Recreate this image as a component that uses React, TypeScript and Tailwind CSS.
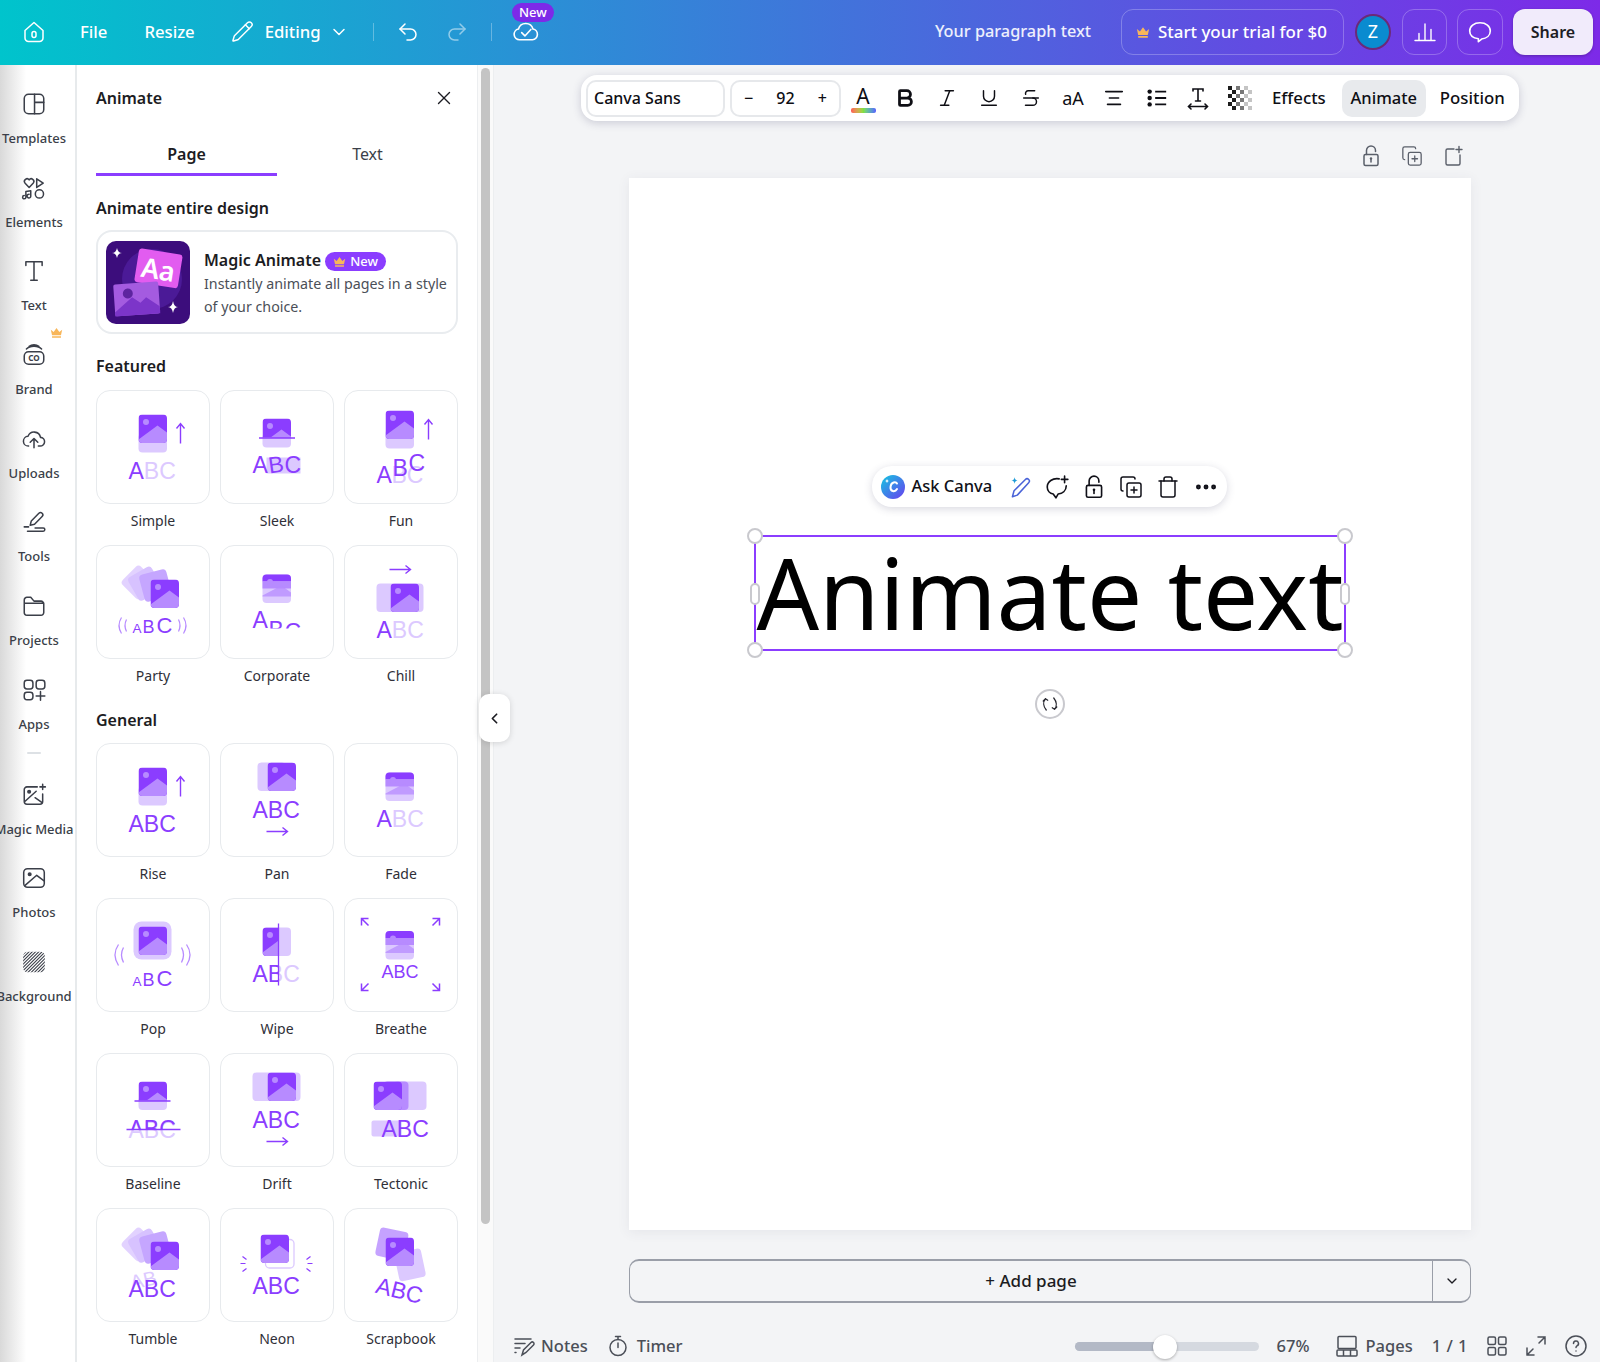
import { type ReactNode } from "react";
import {
  AlignCenter,
  Bold,
  ChevronDown,
  ChevronLeft,
  CopyPlus,
  Ellipsis,
  Italic,
  Pencil,
  Redo2,
  Strikethrough,
  Trash,
  Underline,
  Undo2,
  X,
} from "lucide-react";

const P = "#8b3dff";
const M = "#b78bff";
const F = "#dcc9ff";
const ABC_FONT = "Liberation Sans, sans-serif";

function Pic({ x, y, h = 28.5 }: { x: number; y: number; h?: number }) {
  const id = `c${x}-${y}-${h}`.replace(/\./g, "_");
  return (
    <g transform={`translate(${x} ${y})`}>
      <clipPath id={id}>
        <rect width="28.5" height={h} />
      </clipPath>
      <g clipPath={`url(#${id})`}>
        <rect width="28.5" height="28.5" rx="4" fill={P} />
        <circle cx="7.5" cy="7.5" r="3" fill={M} />
        <path d="M0 25 19 11l9.5 7v6.5a4 4 0 0 1-4 4H4a4 4 0 0 1-4-3.500z" fill={M} />
      </g>
    </g>
  );
}

function Bands({ x, y }: { x: number; y: number }) {
  return (
    <g transform={`translate(${x} ${y})`}>
      <rect width="28.5" height="28.5" rx="4" fill={F} />
      <path d="M0 7V4a4 4 0 0 1 4-4h20.500a4 4 0 0 1 4 4v3z" fill={P} />
      <rect y="7" width="28.5" height="7" fill={M} />
      <path d="M0 21 19 11l9.500 7v4H0z" fill={M} opacity="0.75" />
      <circle cx="7.5" cy="7.5" r="3" fill={M} />
    </g>
  );
}

function Abc({
  x = 33,
  y,
  size = 23,
  a = P,
  b = P,
}: {
  x?: number;
  y: number;
  size?: number;
  a?: string;
  b?: string;
}) {
  return (
    <text x={x} y={y} fontSize={size} fontFamily={ABC_FONT} fill={a}>
      A<tspan fill={b}>BC</tspan>
    </text>
  );
}

function Letter({ ch, x, y, size = 23, fill = P, rotate }: { ch: string; x: number; y: number; size?: number; fill?: string; rotate?: string }) {
  return (
    <text x={x} y={y} fontSize={size} fontFamily={ABC_FONT} fill={fill} transform={rotate}>
      {ch}
    </text>
  );
}

function GrowAbc() {
  return (
    <>
      <Letter ch="A" x={37} y={88} size={13.5} />
      <Letter ch="B" x={47} y={88} size={18} />
      <Letter ch="C" x={61} y={88} size={22} />
    </>
  );
}

function UpArrow({ x, y }: { x: number; y: number }) {
  return <path d={`M${x} ${y + 20}V${y}m-4 5 4-5 4 5`} fill="none" stroke={P} strokeWidth="1.4" />;
}

function RightArrow({ x, y }: { x: number; y: number }) {
  return <path d={`M${x} ${y}h21m-5-4 5 4-5 4`} fill="none" stroke={P} strokeWidth="1.4" />;
}

function Stack({ y }: { y: number }) {
  return (
    <g>
      <rect x="30" y={y - 3} width="26" height="26" rx="4" fill="#e2d2ff" transform={`rotate(-45 43 ${y + 10})`} />
      <rect x="36" y={y - 2} width="27" height="27" rx="4" fill="#d7c2ff" transform={`rotate(-30 49 ${y + 11})`} />
      <rect x="46" y={y - 1} width="28" height="28" rx="4" fill="#c5a6ff" transform={`rotate(-15 60 ${y + 13})`} />
    </g>
  );
}

const tiles: Record<string, ReactNode> = {
  Simple: (
    <>
      <rect x="43" y="44" width="28.5" height="19" rx="4" fill={F} />
      <Pic x={43} y={25} />
      <UpArrow x={85} y={34} />
      <Abc y={89} b={F} />
    </>
  ),
  Sleek: (
    <>
      <rect x="47" y="68" width="34" height="16" fill={F} />
      <rect x="43" y="44" width="28.5" height="14" rx="4" fill={F} />
      <Pic x={43} y={29} h={19} />
      <path d="M39.500 48.500h36" stroke={P} strokeWidth="1.300" />
      <Letter ch="A" x={33} y={83} />
      <Letter ch="B" x={49} y={83} rotate="rotate(-8 56 76)" />
      <Letter ch="C" x={65} y={83} />
    </>
  ),
  Fun: (
    <>
      <rect x="42" y="40" width="28.500" height="19" rx="4" fill={F} />
      <Pic x={42} y={21} />
      <UpArrow x={85} y={30} />
      <Letter ch="BC" x={48} y={93} fill={F} />
      <Letter ch="A" x={33} y={93} />
      <Letter ch="B" x={49} y={86} />
      <Letter ch="C" x={65} y={81} />
    </>
  ),
  Party: (
    <>
      <Stack y={28} />
      <Pic x={55} y={35} />
      <path d="M26 73q-5 8 0 16M31 75q-3 6 0 12M88 73q5 8 0 16M83 75q3 6 0 12" fill="none" stroke={M} strokeWidth="1.200" />
      <GrowAbc />
    </>
  ),
  Corporate: (
    <>
      <Bands x={43} y={30} />
      <clipPath id="corp">
        <rect x="20" y="60" width="80" height="24" />
      </clipPath>
      <g clipPath="url(#corp)">
        <Letter ch="A" x={33} y={83} />
        <Letter ch="B" x={49} y={93} />
        <Letter ch="C" x={65} y={95} />
      </g>
    </>
  ),
  Chill: (
    <>
      <RightArrow x={46} y={25} />
      <rect x="33" y="39" width="47" height="28.5" rx="4" fill={F} />
      <Pic x={47} y={39} />
      <Abc y={93} b={F} />
    </>
  ),
  Rise: (
    <>
      <rect x="43" y="44" width="28.5" height="19" rx="4" fill={F} />
      <Pic x={43} y={25} />
      <UpArrow x={85} y={34} />
      <Abc y={89} />
    </>
  ),
  Pan: (
    <>
      <rect x="38" y="20" width="28.5" height="28.5" rx="4" fill={F} />
      <Pic x={48} y={20} />
      <Abc y={75} />
      <RightArrow x={47} y={89} />
    </>
  ),
  Fade: (
    <>
      <Bands x={42} y={30} />
      <Abc y={84} b={F} />
    </>
  ),
  Pop: (
    <>
      <rect x="38" y="24" width="38" height="38" rx="8" fill={F} />
      <Pic x={43} y={29} />
      <path d="M23 47q-7 10 0 21M28 50q-4 7 0 15M91 47q7 10 0 21M86 50q4 7 0 15" fill="none" stroke={M} strokeWidth="1.300" />
      <GrowAbc />
    </>
  ),
  Wipe: (
    <>
      <rect x="43" y="30" width="28.5" height="28.5" rx="4" fill={F} />
      <clipPath id="wipeL">
        <rect x="20" y="0" width="39" height="114" />
      </clipPath>
      <clipPath id="wipeR">
        <rect x="59" y="0" width="40" height="114" />
      </clipPath>
      <g clipPath="url(#wipeL)">
        <Pic x={43} y={30} />
        <Abc y={84} />
      </g>
      <g clipPath="url(#wipeR)">
        <Abc y={84} a={F} b={F} />
      </g>
      <path d="M59 26v62" stroke={P} strokeWidth="1.300" />
    </>
  ),
  Breathe: (
    <>
      <Bands x={42} y={33.5} />
      <Abc x={38} y={80} size={18} />
      <path
        d="M18 28v-7h7M18 21l7 7M96 28v-7h-7M96 21l-7 7M18 86v7h7M18 93l7-7M96 86v7h-7M96 93l-7-7"
        fill="none"
        stroke={P}
        strokeWidth="1.500"
      />
    </>
  ),
  Baseline: (
    <>
      <rect x="43" y="44" width="28.500" height="13.500" rx="4" fill={F} />
      <Pic x={43} y={29} h={19} />
      <path d="M39 48.500h36" stroke={P} strokeWidth="1.300" />
      <Letter ch="ABC" x={33} y={85} fill={F} />
      <clipPath id="base">
        <rect x="20" y="60" width="80" height="17" />
      </clipPath>
      <g clipPath="url(#base)">
        <Abc y={84} />
      </g>
      <path d="M31 77h54" stroke={P} strokeWidth="1.300" />
    </>
  ),
  Drift: (
    <>
      <rect x="33" y="20" width="48" height="28.5" rx="4" fill={F} />
      <Pic x={48} y={20} />
      <Abc y={75} />
      <RightArrow x={47} y={89} />
    </>
  ),
  Tectonic: (
    <>
      <rect x="50" y="29" width="33" height="28.500" rx="4" fill={F} />
      <rect x="40" y="29" width="25" height="28.500" rx="4" fill={M} />
      <Pic x={30} y={29} />
      <rect x="28" y="68" width="30" height="16" rx="2" fill={F} />
      <Abc x={38} y={84} />
    </>
  ),
  Tumble: (
    <>
      <Stack y={27} />
      <Pic x={55} y={34} />
      <Letter ch="AB" x={35} y={80} size={20} fill={F} rotate="rotate(-12 45 75)" />
      <Abc y={89} />
    </>
  ),
  Neon: (
    <>
      <rect x="46" y="32" width="28.500" height="28.500" rx="4" fill="none" stroke={F} strokeWidth="1.300" />
      <Pic x={41} y={27} />
      <path d="M23 49l4 3M21 56h5M23 64l4-3M91 49l-4 3M93 56h-5M91 64l-4-3" stroke={P} strokeWidth="1.200" />
      <Abc y={86} />
    </>
  ),
  Scrapbook: (
    <>
      <rect x="34" y="22" width="29" height="29" rx="4" fill={M} opacity="0.8" transform="rotate(12 48 36)" />
      <rect x="53" y="43" width="27" height="29" rx="4" fill={F} transform="rotate(-12 66 57)" />
      <Pic x={42} y={30} />
      <g transform="rotate(14 56 84)">
        <Abc x={32} y={91} />
      </g>
    </>
  ),
};

function Tile({ name }: { name: string }) {
  return (
    <div className="flex flex-col items-center">
      <div className="h-[114px] w-[114px] rounded-[14px] border-[1.5px] border-[#e7eaed] bg-white">
        <svg viewBox="1.5 1.5 111 111" className="h-[111px] w-[111px]">
          {tiles[name]}
        </svg>
      </div>
      <div className="mt-[8px] h-[33px] text-[14px] leading-[18px] text-[#2f2f38]">{name}</div>
    </div>
  );
}

function TileGrid({ names }: { names: string[] }) {
  return (
    <div className="grid grid-cols-[114px_114px_114px] gap-x-[10px] gap-y-0">
      {names.map((n) => (
        <Tile key={n} name={n} />
      ))}
    </div>
  );
}

function RailIcon({ children }: { children: ReactNode }) {
  return (
    <svg viewBox="0 0 24 24" className="h-[26px] w-[26px]" fill="none" stroke="currentColor" strokeWidth="1.400" strokeLinecap="round" strokeLinejoin="round">
      {children}
    </svg>
  );
}

function LockIcon({ className }: { className: string }) {
  return (
    <svg viewBox="0 0 24 24" className={className} fill="none" stroke="currentColor" strokeWidth="1.500" strokeLinecap="round">
      <rect x="5" y="10.500" width="14" height="11" rx="1.500" />
      <path d="M7.500 10.500V6.500a4.500 4.500 0 0 1 9 0v1" />
      <path d="M12 15v3" strokeWidth="1.500" />
      <circle cx="12" cy="14.500" r="1.200" fill="currentColor" stroke="none" />
    </svg>
  );
}

const railItems: { label: string; icon: ReactNode }[] = [
  {
    label: "Templates",
    icon: (
      <RailIcon>
        <rect x="3" y="3" width="18" height="18" rx="4" />
        <path d="M12.500 3v18M12.500 10.500H21" />
      </RailIcon>
    ),
  },
  {
    label: "Elements",
    icon: (
      <RailIcon>
        <path d="M7.500 11.500 3.600 7.300a2.400 2.400 0 0 1 3.900-2.800 2.400 2.400 0 0 1 3.900 2.800zM14.500 3.500l6 4-6 4zM9 14.500v5a1.700 1.700 0 1 1-1.500-1.700M9 14.500l-4.500.7v5.300a1.500 1.500 0 1 1-1.500-1.500" />
        <circle cx="17" cy="17.500" r="3.800" />
      </RailIcon>
    ),
  },
  {
    label: "Text",
    icon: (
      <RailIcon>
        <path d="M4.500 7V3.500h15V7M12 3.500v17M9 20.500h6" />
      </RailIcon>
    ),
  },
  {
    label: "Brand",
    icon: (
      <RailIcon>
        <rect x="3" y="9" width="18" height="11.500" rx="4" />
        <path d="M5 6.500c3-3.500 11-3.500 14 0M7.500 4c2.500-2 6.500-2 9 0" />
        <text x="12" y="17.500" textAnchor="middle" fontSize="7.500" fontWeight="700" stroke="none" fill="currentColor" fontFamily="Noto Sans, sans-serif">
          CO
        </text>
      </RailIcon>
    ),
  },
  {
    label: "Uploads",
    icon: (
      <RailIcon>
        <path d="M7 18.500a4.500 4.500 0 0 1-.500-9 6 6 0 0 1 11.500 1 4 4 0 0 1-.500 8H16M12 20v-8.500m-3.500 3.500 3.500-3.500 3.500 3.500" />
      </RailIcon>
    ),
  },
  {
    label: "Tools",
    icon: (
      <RailIcon>
        <path d="m8.500 15 1-4 7-7a2 2 0 0 1 3 3l-7 7zM3 16.500h4M6 20.500h14.500a1.500 1.500 0 0 0 0-3H13" />
      </RailIcon>
    ),
  },
  {
    label: "Projects",
    icon: (
      <RailIcon>
        <path d="M3 8V6.500A2.500 2.500 0 0 1 5.500 4H9l3 3.500h6.500A2.500 2.500 0 0 1 21 10v8a2.500 2.500 0 0 1-2.500 2.500h-13A2.500 2.500 0 0 1 3 18zM3 9.500h18" />
      </RailIcon>
    ),
  },
  {
    label: "Apps",
    icon: (
      <RailIcon>
        <rect x="3" y="3" width="8" height="8" rx="2.500" />
        <rect x="14" y="3" width="8" height="8" rx="2.500" />
        <rect x="3" y="14" width="8" height="7" rx="2.500" />
        <path d="M18 13.500v8M14 17.500h8" />
      </RailIcon>
    ),
  },
];

const railItems2: { label: string; icon: ReactNode }[] = [
  {
    label: "Magic Media",
    icon: (
      <RailIcon>
        <path d="M15 4.500H5.500A2.500 2.500 0 0 0 3 7v11a2.500 2.500 0 0 0 2.500 2.500h12A2.500 2.500 0 0 0 20 18v-7M3.500 18 14 8.500" />
        <circle cx="7.500" cy="9" r="1.200" fill="currentColor" />
        <path d="M13 14.500l6.500 4.500M20 2v5M17.500 4.500h5" />
      </RailIcon>
    ),
  },
  {
    label: "Photos",
    icon: (
      <RailIcon>
        <rect x="2.500" y="3.500" width="19" height="17" rx="3.500" />
        <circle cx="8" cy="8.500" r="1.200" fill="currentColor" />
        <path d="m3.500 19 11-9.500 6.500 5" />
      </RailIcon>
    ),
  },
  {
    label: "Background",
    icon: (
      <RailIcon>
        <clipPath id="bgclip">
          <rect x="2" y="2.500" width="20" height="19" rx="4" />
        </clipPath>
        <g clipPath="url(#bgclip)" strokeWidth="1">
          <path d="M-2 6 6-2M-2 9 9-2M-2 12 12-2M-2 15 15-2M-2 18 18-2M-2 21 21-2M-2 24 24-2M1 24 26-1M4 24 26 2M7 24 26 5M10 24 26 8M13 24 26 11M16 24 26 14M19 24 26 17" />
        </g>
      </RailIcon>
    ),
  },
];

function Crown({ className }: { className: string }) {
  return (
    <svg viewBox="0 0 16 13" className={className} fill="#f8b65a">
      <path d="M1 3l3.500 3L8 1l3.500 5L15 3l-1.500 7h-11zM2.500 11h11v2h-11z" />
    </svg>
  );
}

function RailItem({ label, icon, crown }: { label: string; icon: ReactNode; crown?: boolean }) {
  return (
    <div className="relative flex h-[83.700px] w-full flex-col items-center pt-[15px] text-[#3b3f49]">
      {crown && <Crown className="absolute left-[50px] top-[0px] h-[11px] w-[13px]" />}
      {icon}
      <div className="mt-[12px] whitespace-nowrap text-[13px] font-medium leading-[18px]">{label}</div>
    </div>
  );
}

function HeaderDivider() {
  return <div className="h-[18px] w-px bg-white/30" />;
}

function Header() {
  return (
    <header className="relative flex h-[65px] shrink-0 items-center bg-[linear-gradient(90deg,#00c4cc,#7d2ae8)] pb-[2px] pl-[22px] pr-[7px] text-white">
      <svg viewBox="0 0 24 24" className="h-[24px] w-[24px]" fill="none" stroke="currentColor" strokeWidth="1.500" strokeLinejoin="round">
        <path d="M3 10.500 12 2.500l9 8v7.500a3.500 3.500 0 0 1-3.500 3.500h-11A3.500 3.500 0 0 1 3 18z" />
        <rect x="10" y="11.500" width="4" height="6" rx="2" />
      </svg>
      <span className="ml-[34px] text-[16.700px] font-medium">File</span>
      <span className="ml-[37px] text-[16.700px] font-medium">Resize</span>
      <Pencil className="ml-[36px] h-[23px] w-[23px]" strokeWidth={1.500} />
      <span className="ml-[11px] text-[16.700px] font-medium">Editing</span>
      <ChevronDown className="ml-[8px] h-[20px] w-[20px]" strokeWidth={1.800} />
      <div className="ml-[24px]">
        <HeaderDivider />
      </div>
      <Undo2 className="ml-[22px] h-[24px] w-[24px]" strokeWidth={1.500} />
      <Redo2 className="ml-[25px] h-[24px] w-[24px] opacity-50" strokeWidth={1.500} />
      <div className="ml-[22px]">
        <HeaderDivider />
      </div>
      <svg viewBox="0 0 26 24" className="ml-[20px] mt-[-3px] h-[26px] w-[28px]" fill="none" stroke="currentColor" strokeWidth="1.500" strokeLinecap="round" strokeLinejoin="round">
        <path d="M7 21a5 5 0 0 1-1-9.900 7 7 0 0 1 13.500 0A5 5 0 0 1 19 21zM9 14.500l3 3 5.500-6" />
      </svg>
      <div className="absolute left-[512px] top-[3px] rounded-full bg-[#7d2ae8] px-[7px] text-[13px] font-medium leading-[19px]">New</div>
      <div className="ml-auto text-[16.300px] font-medium text-white/90">Your paragraph text</div>
      <div className="ml-[30px] flex h-[46px] w-[223px] items-center rounded-[12px] border border-white/25 pl-[14px] text-[16.900px] font-medium">
        <Crown className="h-[12px] w-[14px]" />
        <span className="ml-[8px] whitespace-nowrap">Start your trial for $0</span>
      </div>
      <div className="ml-[11px] flex h-[36px] w-[36px] items-center justify-center rounded-full border-2 border-[#6b2a78] bg-[#0a8bd0] text-[18px]">Z</div>
      <div className="ml-[11px] flex h-[46px] w-[45px] items-center justify-center rounded-[12px] border border-white/25">
        <svg viewBox="0 0 24 24" className="h-[24px] w-[24px]" fill="none" stroke="currentColor" strokeWidth="1.400" strokeLinecap="round">
          <path d="M2 20.500h20M6 20.500v-7M12 20.500V4M18 20.500v-11" />
        </svg>
      </div>
      <div className="ml-[10px] flex h-[46px] w-[46px] items-center justify-center rounded-[12px] border border-white/25">
        <svg viewBox="0 0 24 24" className="h-[26px] w-[26px]" fill="none" stroke="currentColor" strokeWidth="1.500" strokeLinejoin="round">
          <path d="M12 3.500c5.500 0 9.500 3 9.500 7.500 0 4.200-3.500 7-8 7.500l-3 2.500v-2.700C6 17.500 2.500 15 2.500 11c0-4.500 4-7.500 9.500-7.500z" />
        </svg>
      </div>
      <div className="ml-[10px] flex h-[46px] w-[80px] items-center justify-center rounded-[12px] bg-[#f1ebfb] text-[16px] font-semibold text-[#1d1d24] shadow-[0_1px_3px_rgba(0,0,0,0.25)]">Share</div>
    </header>
  );
}

function Rail() {
  return (
    <aside className="flex h-full w-[77px] shrink-0 flex-col overflow-hidden border-r-2 border-[#e7eaec] bg-gradient-to-r from-[#d9d9d9] via-white via-[35%] to-white pr-[7px] pt-[11px]">
      {railItems.map((item) => (
        <RailItem key={item.label} {...item} crown={item.label === "Brand"} />
      ))}
      <div className="h-[21px] shrink-0 pt-[6px]">
        <div className="mx-auto h-[2px] w-[14px] rounded bg-[#dde1e5]" />
      </div>
      {railItems2.map((item) => (
        <RailItem key={item.label} {...item} />
      ))}
    </aside>
  );
}

function MagicThumb() {
  return (
    <svg viewBox="0 0 84 83" className="h-[83px] w-[84px] shrink-0 rounded-[10px]">
      <rect width="84" height="83" fill="#3c0d7c" />
      <circle cx="46" cy="38" r="30" fill="#4b1a97" />
      <g transform="rotate(9 50 30)">
        <rect x="30" y="10" width="44" height="34" rx="3" fill="#e25cf0" />
        <text x="35" y="38" fontSize="27" fontWeight="600" fill="#fff" fontFamily="Noto Sans, sans-serif">
          Aa
        </text>
      </g>
      <g transform="rotate(-4 30 55)">
        <rect x="8" y="42" width="45" height="32" rx="2" fill="#a45be0" />
        <circle cx="22" cy="52" r="5" fill="#5d259f" />
        <path d="M8 70 26 56l8 6 6-5 13 10v7H8z" fill="#7c35c9" />
      </g>
      <path d="M11 7q1 5 5 5-4 0-5 5-1-5-5-5 4 0 5-5zM67 60q1 6 5 6-4 0-5 6-1-6-5-6 4 0 5-6z" fill="#fff" />
    </svg>
  );
}

function AnimatePanel() {
  return (
    <div className="h-full w-[400px] shrink-0 overflow-hidden bg-white pl-[19px]">
      <div className="flex h-[66px] items-center justify-between pr-[22px]">
        <h1 className="text-[16px] font-semibold text-[#1c1c22]">Animate</h1>
        <X className="h-[22px] w-[22px] text-[#1c1c22]" strokeWidth={1.500} />
      </div>
      <div className="flex w-[362px] text-[16px]">
        <div className="h-[45px] w-[181px] border-b-[3px] border-[#8b3dff] pt-[11px] text-center font-semibold text-[#1c1c22]">Page</div>
        <div className="h-[45px] w-[181px] pt-[11px] text-center text-[#3b3f49]">Text</div>
      </div>
      <h2 className="mt-[21px] text-[16px] font-semibold leading-[22px] text-[#1c1c22]">Animate entire design</h2>
      <div className="mt-[11px] flex h-[104px] w-[362px] items-center rounded-[16px] border-2 border-[#e9ecef] pl-[8px]">
        <MagicThumb />
        <div className="ml-[14px] pt-[3px]">
          <div className="flex items-center">
            <span className="text-[16px] font-semibold leading-[22px] text-[#1c1c22]">Magic Animate</span>
            <span className="ml-[4px] mt-[3px] flex h-[19px] w-[61px] items-center justify-center gap-[4px] rounded-full bg-[#8b3dff] text-[13px] font-medium text-white">
              <Crown className="h-[11px] w-[13px]" />
              New
            </span>
          </div>
          <p className="mt-[1px] w-[250px] text-[14.250px] leading-[23px] text-[#4b4f58]">Instantly animate all pages in a style of your choice.</p>
        </div>
      </div>
      <h2 className="mt-[21px] text-[16px] font-semibold leading-[22px] text-[#1c1c22]">Featured</h2>
      <div className="mt-[13px]">
        <TileGrid names={["Simple", "Sleek", "Fun", "Party", "Corporate", "Chill"]} />
      </div>
      <h2 className="mt-[9px] text-[16px] font-semibold leading-[22px] text-[#1c1c22]">General</h2>
      <div className="mt-[12px]">
        <TileGrid names={["Rise", "Pan", "Fade", "Pop", "Wipe", "Breathe", "Baseline", "Drift", "Tectonic", "Tumble", "Neon", "Scrapbook"]} />
      </div>
    </div>
  );
}

function Toolbar() {
  const icon = "h-[22px] w-[22px]";
  return (
    <div className="flex h-[46px] w-[938px] shrink-0 items-center rounded-[16px] bg-white pl-[5px] text-[#0e0e14] shadow-[0_2px_8px_rgba(60,60,100,0.22)]">
      <div className="flex h-[37px] w-[139px] items-center rounded-[10px] border-2 border-[#e6e8eb] pl-[6px] text-[16px] font-medium">Canva Sans</div>
      <div className="ml-[5px] flex h-[37px] w-[111px] items-center justify-between rounded-[10px] border-2 border-[#e6e8eb] px-[12px] text-[16px] font-medium">
        <span>−</span>
        <span>92</span>
        <span>+</span>
      </div>
      <div className="ml-[9px] flex w-[26px] flex-col items-center">
        <span className="text-[21px] leading-[24px]">A</span>
        <div className="h-[5px] w-[25px] rounded-[2px] bg-gradient-to-r from-[#ff5757] via-[#7fe041] to-[#5b5bff]" />
      </div>
      <div className="ml-[17px] flex w-[24px] justify-center">
        <Bold className={icon} strokeWidth={3} />
      </div>
      <div className="ml-[18px] flex w-[24px] justify-center">
        <Italic className={icon} strokeWidth={1.600} />
      </div>
      <div className="ml-[18px] flex w-[24px] justify-center">
        <Underline className={icon} strokeWidth={1.600} />
      </div>
      <div className="ml-[18px] flex w-[24px] justify-center">
        <Strikethrough className={icon} strokeWidth={1.600} />
      </div>
      <div className="ml-[18px] flex w-[24px] justify-center text-[18px]">aA</div>
      <div className="ml-[17px] flex w-[24px] justify-center">
        <AlignCenter className={icon} strokeWidth={1.800} />
      </div>
      <div className="ml-[19px] flex w-[24px] justify-center">
        <svg viewBox="0 0 24 24" className={icon} fill="currentColor">
          <circle cx="4" cy="5" r="2.400" />
          <circle cx="4" cy="12" r="2.400" />
          <circle cx="4" cy="19" r="2.400" />
          <path d="M10 4h12v2H10zM10 11h12v2H10zM10 18h12v2H10z" />
        </svg>
      </div>
      <div className="ml-[17px] flex w-[24px] justify-center">
        <svg viewBox="0 0 24 24" className="h-[26px] w-[26px]" fill="none" stroke="currentColor" strokeWidth="1.600" strokeLinecap="round">
          <path d="M7 5V3h10v2M12 3v12M9.500 15h5M2.500 20.500h19M5 18l-2.500 2.500L5 23M19 18l2.500 2.500L19 23" />
        </svg>
      </div>
      <div className="ml-[18px] grid w-[24px] grid-cols-6">
        {Array.from({ length: 36 }).map((_, i) => {
          const row = Math.floor(i / 6);
          const col = i % 6;
          const on = (row + col) % 2 === 0;
          return (
            <div
              key={i}
              className={`h-[4px] w-[4px] ${!on ? "bg-white" : col < 2 ? "bg-[#1d1d1d]" : col < 4 ? "bg-[#777]" : "bg-[#c4c4c4]"}`}
            />
          );
        })}
      </div>
      <span className="ml-[20px] text-[16.800px] font-medium">Effects</span>
      <div className="ml-[16px] flex h-[37px] w-[84px] items-center justify-center rounded-[10px] bg-[#e8eaed] text-[16.500px] font-medium">Animate</div>
      <span className="ml-[14px] text-[16.800px] font-medium">Position</span>
    </div>
  );
}

function Handle({ className }: { className: string }) {
  return <div className={`absolute rounded-full border-2 border-[#c9c9ce] bg-white ${className}`} />;
}

function SelectedText() {
  return (
    <div className="relative flex h-[116px] w-[592px] items-center justify-center border-2 border-[#8b3dff]">
      <span className="mt-[-2px] whitespace-nowrap text-[98px] leading-[112px] text-black">Animate text</span>
      <Handle className="-left-[9px] -top-[9px] h-[16px] w-[16px]" />
      <Handle className="-right-[9px] -top-[9px] h-[16px] w-[16px]" />
      <Handle className="-left-[9px] -bottom-[9px] h-[16px] w-[16px]" />
      <Handle className="-right-[9px] -bottom-[9px] h-[16px] w-[16px]" />
      <Handle className="-left-[6px] top-[46px] h-[22px] w-[10px]" />
      <Handle className="-right-[6px] top-[46px] h-[22px] w-[10px]" />
    </div>
  );
}

function AskPill() {
  return (
    <div className="ml-[-2px] flex h-[41px] w-[355px] items-center rounded-[20px] bg-white pl-[9px] text-[#101018] shadow-[0_2px_8px_rgba(60,60,100,0.2)]">
      <svg viewBox="0 0 24 24" className="h-[24px] w-[24px]">
        <defs>
          <linearGradient id="askg" x1="0" y1="0" x2="1" y2="1">
            <stop offset="0" stopColor="#12c8e0" />
            <stop offset="1" stopColor="#6a3df0" />
          </linearGradient>
        </defs>
        <circle cx="12" cy="12" r="12" fill="url(#askg)" />
        <path d="M16 8.500c-1-2-6-2-6.500 3.500-.4 4.500 4.500 5.500 6.500 2" fill="none" stroke="#fff" strokeWidth="2" strokeLinecap="round" />
        <path d="M6 4q.5 2 2 2-1.500 0-2 2-.5-2-2-2 1.500 0 2-2z" fill="#fff" />
      </svg>
      <span className="ml-[7px] text-[16.500px] font-medium">Ask Canva</span>
      <svg viewBox="0 0 24 24" className="ml-[15px] h-[26px] w-[26px]" fill="none" stroke="#4a63d8" strokeWidth="1.400" strokeLinejoin="round">
        <path d="m5 21 1.500-5.500L17 5a2 2 0 0 1 3 3L9.500 19.500z" />
        <path d="M7 3q.5 3 3 3-2.500 0-3 3-.5-3-3-3 2.500 0 3-3z" fill="#1e9bd7" stroke="none" />
      </svg>
      <svg viewBox="0 0 24 24" className="ml-[11px] h-[26px] w-[26px]" fill="none" stroke="currentColor" strokeWidth="1.500" strokeLinecap="round" strokeLinejoin="round">
        <path d="M14 4.500C8 3.500 3 7 3 12c0 3.500 2.500 6 5.500 6.500L11 22l2-3.500c4-.5 7.500-3 7.500-7.500M19 2v6M16 5h6" />
      </svg>
      <LockIcon className="ml-[11px] h-[26px] w-[26px]" />
      <CopyPlus className="ml-[12px] h-[24px] w-[24px]" strokeWidth={1.500} />
      <Trash className="ml-[13px] h-[24px] w-[24px]" strokeWidth={1.500} />
      <Ellipsis className="ml-[13px] h-[26px] w-[26px]" strokeWidth={2.500} />
    </div>
  );
}

function BottomBar() {
  return (
    <div className="flex h-[36px] items-center pl-[19px] text-[16.500px] font-medium text-[#4b4f58]">
      <svg viewBox="0 0 24 24" className="h-[24px] w-[24px]" fill="none" stroke="currentColor" strokeWidth="1.500" strokeLinecap="round">
        <path d="M2 5h16M2 9.500h10M2 14h5M2 18.500h1M9 21l1.500-5L18 8.500a1.700 1.700 0 0 1 2.500 2.500L13 18.500z" />
      </svg>
      <span className="ml-[4px]">Notes</span>
      <svg viewBox="0 0 24 24" className="ml-[18px] h-[24px] w-[24px]" fill="none" stroke="currentColor" strokeWidth="1.500" strokeLinecap="round">
        <circle cx="12" cy="13.500" r="8" />
        <path d="M9.500 2.500h5M12 2.500v3M12 9v4.500" />
      </svg>
      <span className="ml-[7px]">Timer</span>
      <div className="relative ml-[392px] h-[9px] w-[184px] rounded-full bg-[#d5d9e0]">
        <div className="h-full w-[90px] rounded-l-full bg-[#b3b9c6]" />
        <div className="absolute left-[78px] top-[-7px] h-[24px] w-[24px] rounded-full bg-white shadow-[0_1px_3px_rgba(0,0,0,0.3)]" />
      </div>
      <span className="ml-[18px]">67%</span>
      <svg viewBox="0 0 24 24" className="ml-[26px] h-[24px] w-[24px]" fill="none" stroke="currentColor" strokeWidth="1.500">
        <rect x="3" y="2.500" width="18" height="12" rx="1" />
        <rect x="2" y="16" width="20" height="6" rx="1" />
        <path d="M8.500 16v6M15.500 16v6" />
      </svg>
      <span className="ml-[6px]">Pages</span>
      <span className="ml-[19px] tracking-[0.5px]">1 / 1</span>
      <svg viewBox="0 0 24 24" className="ml-[17px] h-[24px] w-[24px]" fill="none" stroke="currentColor" strokeWidth="1.500">
        <rect x="3" y="3" width="7.500" height="7.500" rx="1.500" />
        <rect x="13.500" y="3" width="7.500" height="7.500" rx="1.500" />
        <rect x="3" y="13.500" width="7.500" height="7.500" rx="1.500" />
        <rect x="13.500" y="13.500" width="7.500" height="7.500" rx="1.500" />
      </svg>
      <svg viewBox="0 0 24 24" className="ml-[15px] h-[24px] w-[24px]" fill="none" stroke="currentColor" strokeWidth="1.500" strokeLinecap="round">
        <path d="M14 3h7v7M21 3l-6 6M10 21H3v-7M3 21l6-6" />
      </svg>
      <svg viewBox="0 0 24 24" className="ml-[16px] h-[24px] w-[24px]" fill="none" stroke="currentColor" strokeWidth="1.500" strokeLinecap="round">
        <circle cx="12" cy="12" r="10" />
        <path d="M9.500 9.500a2.500 2.500 0 1 1 3.500 2.300c-.7.400-1 .9-1 1.700M12 17h.01" />
      </svg>
    </div>
  );
}

function Canvas() {
  return (
    <main className="flex h-full min-w-0 flex-1 flex-col bg-[#f3f4f6]">
      <div className="flex flex-col pl-[135px] pr-[129px]">
        <div className="mx-[-48px] mt-[10px]">
          <Toolbar />
        </div>
        <div className="flex h-[57px] items-center justify-end gap-[18px] pr-[6px] pt-[12px] text-[#5a5f6a]">
          <LockIcon className="h-[24px] w-[24px]" />
          <CopyPlus className="h-[22px] w-[22px]" strokeWidth={1.400} />
          <svg viewBox="0 0 24 24" className="h-[24px] w-[24px]" fill="none" stroke="currentColor" strokeWidth="1.400" strokeLinecap="round">
            <path d="M13 5H6.500A1.500 1.500 0 0 0 5 6.500v13A1.500 1.500 0 0 0 6.500 21h11a1.500 1.500 0 0 0 1.500-1.500V11M18 2.500v6M15 5.500h6" />
          </svg>
        </div>
        <div className="flex h-[1052px] flex-col items-center bg-white pt-[288px] shadow-[0_2px_12px_rgba(60,64,90,0.08)]">
          <AskPill />
          <div className="mt-[28px]">
            <SelectedText />
          </div>
          <div className="mt-[38px] flex h-[30px] w-[30px] items-center justify-center rounded-full border-2 border-[#c9c9ce] bg-white">
            <svg viewBox="0 0 24 24" className="h-[18px] w-[18px]" fill="none" stroke="#26262e" strokeWidth="1.700" strokeLinecap="round" strokeLinejoin="round">
              <path d="M6 5C2.500 9 3 15 7 20M3 8l3-3 3 2M18 19c3.500-4 3-10-1-15M21 16l-3 3-3-2" />
            </svg>
          </div>
        </div>
        <div className="mt-[29px] flex h-[44px] rounded-[10px] border border-[#9a9ea8] border-t-2 border-b-2 text-[17px] font-medium text-[#1c1c22]">
          <div className="flex flex-1 items-center justify-center">+ Add page</div>
          <div className="flex w-[38px] items-center justify-center border-l border-[#9a9ea8]">
            <ChevronDown className="h-[16px] w-[16px]" strokeWidth={2} />
          </div>
        </div>
      </div>
      <div className="mt-[25px]">
        <BottomBar />
      </div>
    </main>
  );
}

export default function App() {
  return (
    <div className="flex h-screen w-screen flex-col overflow-hidden bg-white font-['Noto_Sans',sans-serif]">
      <Header />
      <div className="relative flex min-h-0 flex-1">
        <Rail />
        <AnimatePanel />
        <div className="h-full w-[17px] shrink-0 border-x border-[#eceef0] bg-[#fafafa] px-[3px] pt-[3px]">
          <div className="h-[1156px] w-full rounded-full bg-[#c4c4c4]" />
        </div>
        <div className="absolute left-[479px] top-[629px] flex h-[48px] w-[31px] items-center justify-center rounded-[10px] bg-white shadow-[0_1px_6px_rgba(0,0,0,0.14)]">
          <ChevronLeft className="h-[17px] w-[17px] text-[#1c1c22]" strokeWidth={2.400} />
        </div>
        <Canvas />
      </div>
    </div>
  );
}
